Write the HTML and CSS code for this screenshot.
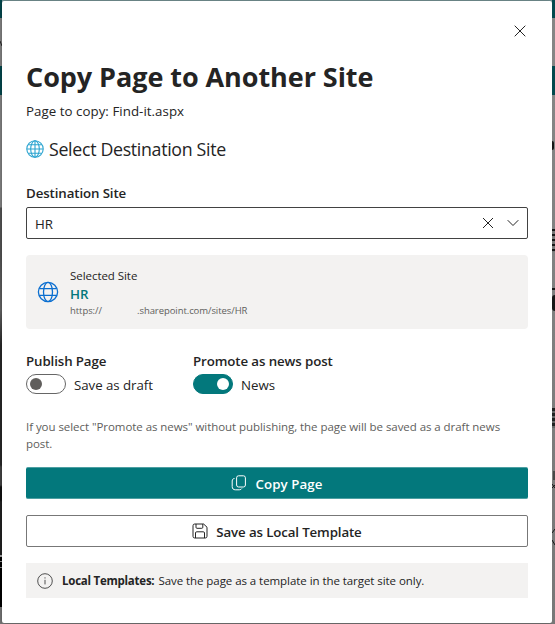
FILE: index.html
```html
<!DOCTYPE html>
<html lang="en">
<head>
<meta charset="utf-8">
<title>Copy Page to Another Site</title>
<link rel="stylesheet" href="styles.css">
</head>
<body>
<div class="backdrop left" aria-hidden="true"><svg class="tick" viewBox="0 0 2 8"><path d="M0 1l2 5"/></svg></div>
<main class="dialog">
  <div class="topbar">
    <svg class="close" viewBox="0 0 12 12"><path d="M.7.7l10.6 10.6M11.3.7L.7 11.3"/></svg>
  </div>
  <h1><span>Copy Page to Another Site</span></h1>
  <p class="source"><span>Page to copy: Find-it.aspx</span></p>
  <h2>
    <svg class="globe-small" viewBox="0 0 18 18"><circle cx="9" cy="9" r="8.2"/><ellipse cx="9" cy="9" rx="4.3" ry="8.2"/><path d="M9 .8v16.4M.8 9h16.4M2.3 4.7h13.4M2.3 13.3h13.4"/></svg>
    <span>Select Destination Site</span>
  </h2>
  <div class="label dest"><span>Destination Site</span></div>
  <div class="combo">
    <span class="value">HR</span>
    <svg class="clear" viewBox="0 0 12 12"><path d="M1 1l10 10M11 1L1 11"/></svg>
    <svg class="chevron" viewBox="0 0 12 8"><path d="M.7 1.2L6 6.5l5.300-5.300"/></svg>
  </div>
  <section class="card">
    <svg class="globe" viewBox="0 0 22 22"><circle cx="11" cy="11" r="9.600"/><ellipse cx="11" cy="11" rx="4.500" ry="9.600"/><path d="M2.300 7.600h17.400M2.300 14.400h17.400"/></svg>
    <div class="card-text">
      <div class="selected"><span>Selected Site</span></div>
      <div class="site">HR</div>
      <div class="url"><span>https://</span><span class="domain">.sharepoint.com/sites/HR</span></div>
    </div>
  </section>
  <div class="toggles">
    <div class="field">
      <div class="label"><span class="t-publish">Publish Page</span></div>
      <div class="row"><span class="switch"></span><span class="t-draft">Save as draft</span></div>
    </div>
    <div class="field">
      <div class="label"><span class="t-promote">Promote as news post</span></div>
      <div class="row"><span class="switch on"></span><span class="t-news">News</span></div>
    </div>
  </div>
  <p class="note"><span>If you select "Promote as news" without publishing, the page will be saved as a draft news</span><br>post.</p>
  <button class="primary">
    <svg class="copy" viewBox="0 0 16 16"><rect x="5.600" y=".8" width="8.800" height="11.200" rx="2"/><path d="M3.500 3.500C2.200 3.600 1.200 4.300 1.200 6v5.500c0 2.300 1.200 3.300 3.300 3.300h3.800c1.300 0 2.100-.5 2.500-1.300"/></svg>
    <span>Copy Page</span>
  </button>
  <button class="secondary">
    <svg class="save" viewBox="0 0 16 16"><path d="M3 1h8.600L15 4.200V13.300Q15 15 13.300 15H2.700Q1 15 1 13.300V2.700Q1 1 2.700 1zM4 1v3.300q0 1 1 1h4.800q1 0 1-1V1M3.500 15V10q0-1.200 1.200-1.200h6.600q1.200 0 1.200 1.200v5"/></svg>
    <span>Save as Local Template</span>
  </button>
  <div class="info">
    <svg class="info-icon" viewBox="0 0 16 16"><circle cx="8" cy="8" r="7.300"/><path d="M8 6.800v4.600M8 4.300v1.200"/></svg>
    <span class="t-strong">Local Templates:</span><span class="t-info">Save the page as a template in the target site only.</span>
  </div>
</main>
<div class="backdrop right" aria-hidden="true">
  <i class="mark p"></i><i class="mark a"></i><i class="mark b"></i><i class="mark c"></i><i class="mark d"></i>
  <svg class="strokes" viewBox="0 0 3 80"><path d="M2 0v9M0 13l3 4M0 17l3-3M3 58l-3 4M0 69l3 5"/></svg>
</div>
</body>
</html>
```

FILE: styles.css
```css
* { box-sizing: border-box; }
body {
  margin: 0;
  width: 555px;
  height: 624px;
  overflow: hidden;
  display: grid;
  grid-template-columns: 2px 550px 3px;
  background: linear-gradient(#7d9c9f 0 2px, #7b7b7b 2px);
  color: #242424;
  font: 13.300px/18px "Open Sans", "Noto Sans", sans-serif;
}
h1, h2, p { margin: 0; font-weight: 400; }
span { white-space: nowrap; }
svg { display: block; flex: none; fill: none; stroke: #242424; stroke-width: 1; }
.backdrop { position: relative; overflow: hidden; height: 624px; }
.left {
  background: linear-gradient(#03494e 0 18px, #858585 18px 66px, #03494e 66px 95px, #858585 95px 207px, #555 208px 255px, #666 310px, #292929 345px 465px, #444 467px 485px, #111 487px 500px, #222 502px 555px, #aaa 555px 557px, #000 557px 561px, #999 561px 562px, #000 562px 567px, #888 567px 568px, #000 568px 607px, #777 607px);
}
.right { background: linear-gradient(#03494e 0 18px, #858585 18px 66px, #03494e 66px 95px, #858585 95px, #777); }
.tick { position: absolute; left: 0; top: 40px; width: 2px; height: 8px; }
.mark { position: absolute; left: 0; width: 3px; background: #171717; }
.p { top: 141px; height: 9px; width: 2px; border-radius: 0 2px 2px 0; }
.a { top: 229px; height: 23px; background: repeating-linear-gradient(#171717 0 2px, #777 2px 5px); }
.b { top: 288px; height: 2px; }
.c { top: 295px; height: 16px; border-radius: 3px 0 0 3px; }
.d { top: 408px; height: 20px; background: repeating-linear-gradient(#222 0 3px, #666 3px 5px); }
.strokes { position: absolute; top: 471px; left: 0; width: 3px; height: 80px; stroke: #171717; }
.dialog {
  height: 622px;
  margin-top: 1px;
  padding: 19px 24px 0;
  border-radius: 2px;
  background: #fff;
  box-shadow: 0 0 4px #0006;
  position: relative;
}
.topbar { height: 39px; display: flex; justify-content: flex-end; padding: 5px 2px 0 0; }
.close { width: 12px; height: 12px; }
h1 { height: 36px; line-height: 36px; font-size: 27px; font-weight: 700; letter-spacing: -.06px; }
.source { height: 18px; margin-top: 7px; letter-spacing: .04px; }
h2 { display: flex; align-items: center; gap: 5px; height: 24px; margin-top: 17px; font-size: 17.800px; line-height: 24px; letter-spacing: -.32px; }
.globe-small { width: 18px; height: 18px; stroke: #2ba4d0; stroke-width: 1.100; }
.label { font-weight: 600; height: 18px; letter-spacing: -.11px; }
.dest { margin-top: 23px; }
.combo { display: flex; align-items: center; height: 32px; margin-top: 5px; padding: 0 8px; border: 1px solid #424242; border-radius: 2px; }
.value { flex: 1; padding-top: 2px; }
.clear { width: 12px; height: 12px; margin-right: 13px; }
.chevron { width: 12px; height: 8px; }
.card { display: flex; height: 74px; margin-top: 16px; padding: 12px 11px; border-radius: 4px; background: #f3f2f1; }
.globe { width: 22px; height: 22px; margin: 14px 11px 0 0; stroke: #0b6fd0; stroke-width: 1.300; }
.selected { height: 18px; font-size: 11.500px; letter-spacing: -.05px; }
.site { height: 18px; font-weight: 600; color: #03787c; line-height: 18px; }
.url { height: 14px; font-size: 9.500px; line-height: 15px; letter-spacing: -.07px; color: #605e5c; display: flex; }
.url span:first-child { width: 67px; }
.toggles { display: grid; grid-template-columns: 167px 1fr; margin-top: 23px; }
.row { display: flex; align-items: center; gap: 8px; height: 22px; margin-top: 3px; }
.t-draft, .t-news { padding-top: 2px; letter-spacing: -.05px; }
.switch { width: 40px; height: 20px; border: 1px solid #666; border-radius: 10px; padding: 3px; display: flex; }
.switch::before { content: ""; width: 12px; height: 12px; border-radius: 50%; background: #605e5c; }
.on { background: #03787c; border-color: #03787c; justify-content: flex-end; }
.on::before { background: #fff; }
.note { margin-top: 23px; font-size: 11.500px; line-height: 17px; letter-spacing: -.055px; color: #605e5c; }
button { display: flex; align-items: center; justify-content: center; width: 502px; height: 32px; padding: 0; border-radius: 2px; font: 600 13.300px/18px "Open Sans", sans-serif; color: #242424; }
button span { padding-top: 2px; }
.primary { margin-top: 15px; border: 1px solid #4d9fa2; border-width: 1px 0; background: #03787c; color: #fff; gap: 8px; letter-spacing: .08px; }
.copy { width: 16px; height: 16px; stroke: #fff; }
.secondary { margin-top: 16px; border: 1px solid #777; background: #fff; gap: 8px; letter-spacing: -.13px; }
.save { width: 16px; height: 16px; }
.info { display: flex; align-items: center; height: 35px; margin-top: 16px; padding-left: 11px; background: #f3f2f1; font-size: 11.500px; letter-spacing: -.06px; }
.info-icon { width: 16px; height: 16px; margin-right: 9px; stroke: #505050; }
.t-strong { font-weight: 700; margin-right: 4px; letter-spacing: -.24px; }
```
